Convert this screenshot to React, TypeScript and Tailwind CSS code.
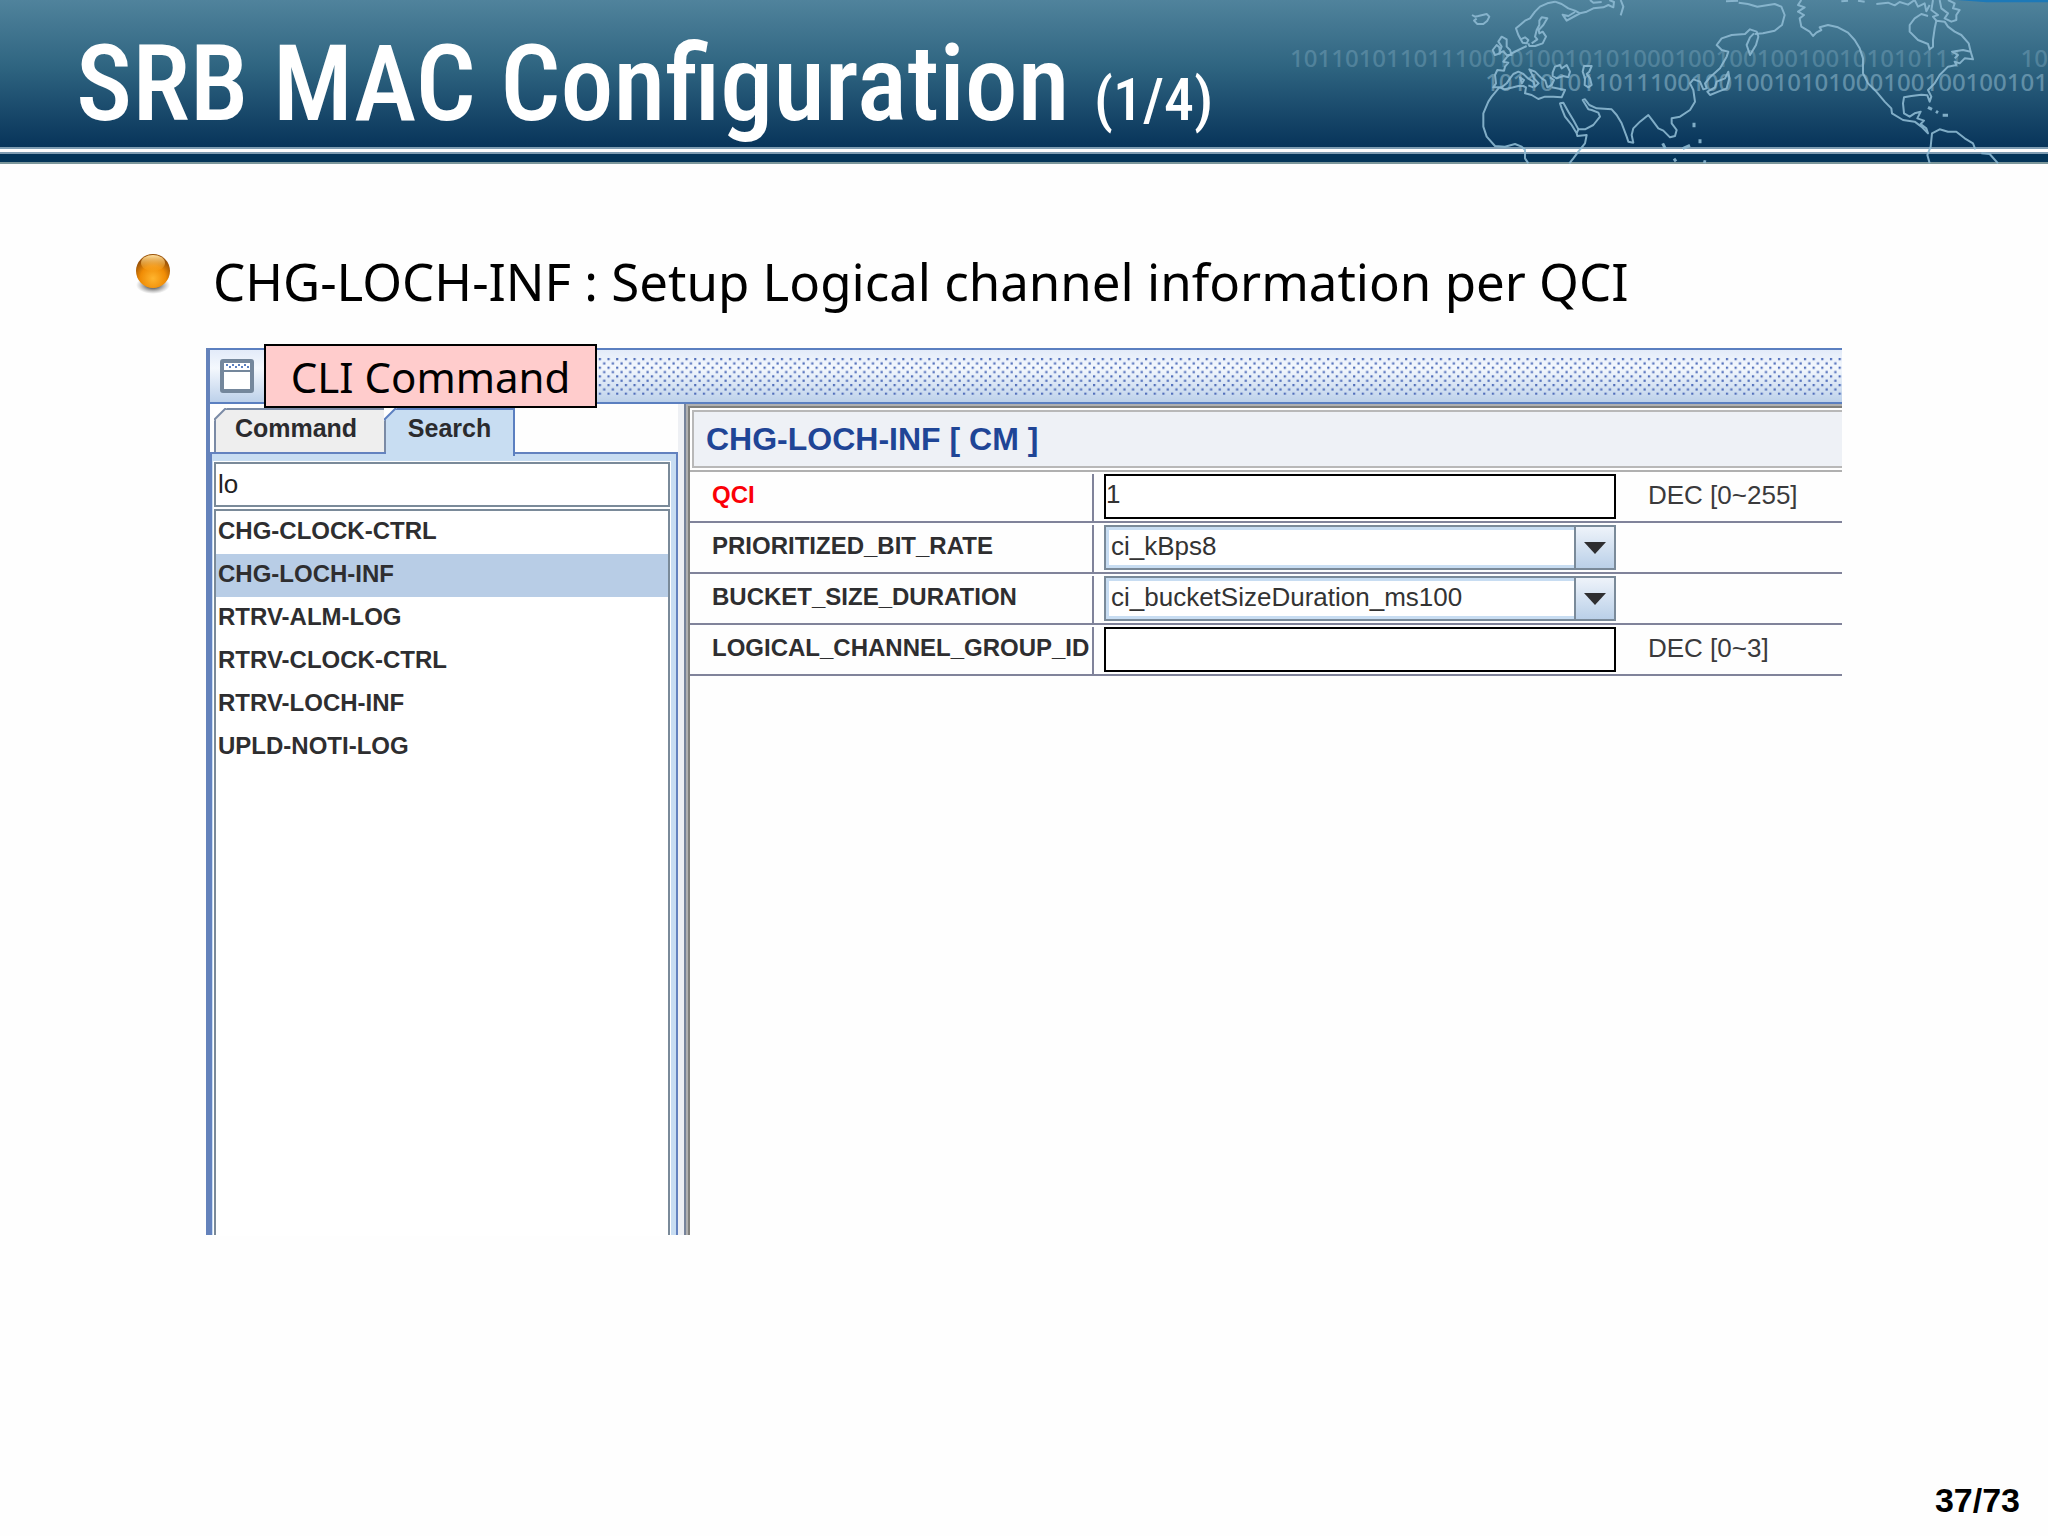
import { useState, type ReactNode } from 'react';

const commands = [
  'CHG-CLOCK-CTRL',
  'CHG-LOCH-INF',
  'RTRV-ALM-LOG',
  'RTRV-CLOCK-CTRL',
  'RTRV-LOCH-INF',
  'UPLD-NOTI-LOG',
];

/** World outline behind the slide title, Europe on the left and the Americas on the right. */
function WorldMap() {
  return (
    <svg
      viewBox="0 0 2334 492"
      className="absolute top-0 right-0 h-full w-[778px]"
      fill="none"
      stroke="#8db9d1"
      strokeWidth="6"
      strokeLinejoin="round"
      strokeOpacity="0.9"
      aria-hidden="true"
    >
      <path d="M2060 0H2334V7H2150Z" fill="#1d79b8" stroke="none" />
      <g transform="translate(570 0)">
        {/* Iceland and Scandinavia */}
        <path d="M36 45L45 50 55 48 80 42 88 50 82 62 70 72 52 72 42 62 50 56" />
        <path d="M285 5L262 10 240 20 225 35 210 55 195 62 180 75 168 85 175 105 182 118 195 112 205 120 200 130 188 128 182 118M205 130L208 138 225 138 248 130 258 110 248 95 238 100 236 90 250 75 262 55 245 52 238 62 238 75 230 90 225 110 232 118 215 130" />
        <path d="M285 5L305 12 325 25 345 32 360 40 380 35 400 25 430 22 445 15 460 22 462 6 448 0M360 40L345 48 320 62 308 44 325 48 345 36M482 0L490 20 482 46M390 0L400 8 425 6" />
        {/* British Isles */}
        <path d="M125 110L115 125 125 140 118 158 130 154 140 165 155 165 150 150 140 140 140 118ZM110 135L98 150 105 165 120 160 118 142Z" />
        {/* Mediterranean */}
        <path d="M200 138L175 150 155 160 140 172 130 185 145 188 135 200 132 212 112 210 105 225 108 250 100 262 125 262 140 250 150 235 160 222 175 215 190 222 205 236 220 245 225 260 236 250 222 235 208 208 225 215 245 235 256 242 262 262 275 255 282 240 270 232M180 232L192 240 186 250ZM205 256L220 262" />
        <path d="M278 218L285 200 300 195 305 205 320 195 330 215 325 232 310 228 290 235 278 228Z" />
        <path d="M372 198L395 198 388 215 380 222 390 235 395 255 385 262 374 255 375 235 368 215Z" />
        <path d="M118 262L135 268 160 262 175 258 190 258 198 262 195 280 215 285 235 297 255 290 280 290 305 292 315 270 290 265 275 262" />
        {/* Africa */}
        <path d="M118 262L95 290 85 305 70 340 70 380 80 410 105 438 135 440 165 432 185 440 195 450 195 475 205 490" />
        <path d="M300 310L310 308 325 335 340 360 355 388 350 400 335 375 315 350 305 325ZM350 400L352 408 380 405 375 430 355 455 340 475 328 490" />
        {/* Arabia, India and the Far East */}
        <path d="M355 388L375 388 400 375 420 350 415 338 395 330 385 328 368 300 375 298 388 315 410 325 455 328 470 345 485 370 500 410 505 425 520 428 515 405 520 385 540 365 565 345 580 365 595 385 610 392 630 412 645 408 650 390 635 370 635 355 660 350 690 330 705 305 700 270 690 250 700 238 720 245 730 268 740 265 735 250 750 232 780 205 800 170 805 155 785 150 770 135 785 115 815 105 855 102 870 88 890 95 895 110 888 135 870 165 860 135 870 112 882 100" />
        <path d="M805 215L795 235 770 245 765 262 742 275 750 285 775 275 800 265 808 235Z" />
        <path d="M702 368V382M720 418V430M608 430L616 446M690 436L668 446M642 476L648 484M730 484L738 486" strokeWidth="9" />
      </g>
      <g transform="translate(1434 0)">
        {/* Kamchatka and the Bering coast */}
        <path d="M0 12L28 20 80 12 100 20 110 45 102 75 80 92 45 100 20 102M-66 4L-30 2M-28 8L0 12" />
        {/* North America */}
        <path d="M160 0L150 15 170 22 150 35 168 45 155 55 160 80 185 95 195 108 205 98 220 90 215 82 240 75 270 82 300 98 320 120 335 145 345 175 345 220 360 250 385 275 410 305 430 325 432 340 465 360 500 365 520 380 540 400 535 385 518 372 528 362 508 355 518 335 500 340 485 350 468 340 465 310 468 292 490 288 520 284 538 286 545 305 550 290 540 270 560 250 575 225 600 200 625 195 620 185 635 190 650 175 675 178 668 155 645 150 612 155 630 165 620 175" />
        <path d="M668 155L662 130 640 105 620 95 600 80 590 65 565 62 560 85 555 120 555 140 545 148 540 132 510 120 485 95 485 75 500 55 520 42 540 48" />
        <path d="M385 12L420 8 440 16 455 6 480 14 500 0 510 20 530 10 535 34 545 15M555 0L550 30 570 45 555 50 565 62M575 0L580 25 600 40 590 55 610 65 625 60 625 45 635 30 615 25 620 10 600 0M280 4L300 2M330 2L350 5" />
        <path d="M540 322L552 328M564 334L570 338M584 346L600 346" strokeWidth="9" />
        {/* South America */}
        <path d="M545 490L538 465 548 440 552 400 575 388 600 395 625 395 650 415 675 430 682 448M700 460L725 462 750 490" />
      </g>
    </svg>
  );
}

function SlideHeader() {
  return (
    <header className="relative flex h-[164px] flex-col">
      <div className="flex-1 bg-linear-to-b from-[#50839c] via-[#2f6581] via-45% to-[#07345a]" />
      <div className="h-[7px] border-y-2 border-[#7f9db3] bg-white" />
      <div className="h-[10px] border-b-2 border-[#7c979b] bg-[#043559]" />
      <div
        aria-hidden="true"
        className="absolute top-[46px] right-0 w-[758px] font-['Noto_Sans',sans-serif] text-2xl leading-6 font-medium whitespace-nowrap text-[#9cc3d6]"
      >
        <div className="flex justify-between opacity-30">
          <span>1011010110111001010010101000100100100100101010111</span>
          <span>10</span>
        </div>
        <div className="text-right opacity-50">10110101101110010010010101000100100100101</div>
      </div>
      <WorldMap />
      <h1 className="absolute top-6 left-[76px] font-['Roboto_Condensed','Liberation_Sans_Narrow',sans-serif] text-[106px] leading-[120px] font-medium whitespace-nowrap text-white">
        SRB MAC Configuration <span className="text-[60px]">(1/4)</span>
      </h1>
    </header>
  );
}

function Bullet() {
  return (
    <svg viewBox="0 0 40 48" className="mt-0.5 h-12 w-10 shrink-0" aria-hidden="true">
      <defs>
        <radialGradient id="ball" cx="50%" cy="72%" r="62%">
          <stop offset="0" stopColor="#ffb52e" />
          <stop offset="0.6" stopColor="#f08c05" />
          <stop offset="1" stopColor="#9a5208" />
        </radialGradient>
        <linearGradient id="gloss" x1="0" y1="0" x2="0" y2="1">
          <stop offset="0" stopColor="#ffe0a0" />
          <stop offset="1" stopColor="#fba41c" stopOpacity="0.2" />
        </linearGradient>
        <radialGradient id="shade">
          <stop offset="0.4" stopColor="#555" stopOpacity="0.8" />
          <stop offset="1" stopColor="#888" stopOpacity="0" />
        </radialGradient>
      </defs>
      <ellipse cx="20" cy="34" rx="17" ry="9" fill="url(#shade)" />
      <circle cx="20" cy="20" r="17" fill="url(#ball)" />
      <ellipse cx="20" cy="12" rx="12" ry="8" fill="url(#gloss)" />
    </svg>
  );
}

function TitleBar() {
  return (
    <div className="flex h-14 items-center border-y-2 border-[#5b7fc0] bg-linear-to-b from-[#e3ebf9] via-[#f4f8fd] via-35% to-[#bdd1ea] pl-2.5">
      <svg viewBox="0 0 34 34" className="size-[34px] shrink-0" aria-hidden="true">
        <rect x="2" y="2" width="30" height="30" rx="1" fill="#fff" stroke="#74879c" strokeWidth="4" />
        <path d="M4 12h26" stroke="#74879c" strokeWidth="2" />
        <path d="M6 6h2M12 6h2M18 6h2M24 6h2M9 8h2M15 8h2M21 8h2M27 8h2" stroke="#5b7fc0" strokeWidth="2" />
      </svg>
      <svg className="ml-6 h-[38px] flex-1" aria-hidden="true">
        <defs>
          <pattern id="dots" width="8.67" height="8.67" patternUnits="userSpaceOnUse">
            <rect x="0" y="1" width="2.2" height="2.2" fill="#4f6dba" />
            <rect x="4.33" y="5.33" width="2.2" height="2.2" fill="#4f6dba" />
          </pattern>
        </defs>
        <rect width="100%" height="100%" fill="url(#dots)" />
      </svg>
    </div>
  );
}

/** Cut-off top left corner of a tab. */
function Corner({ stroke }: { stroke: string }) {
  return (
    <svg viewBox="0 0 13 13" className="absolute -top-0.5 -left-0.5 size-[13px]" aria-hidden="true">
      <path d="M0 0H13L0 13Z" fill="#fff" />
      <path d="M0 12L12 0" stroke={stroke} strokeWidth="2" />
    </svg>
  );
}

function CommandPanel() {
  const [query, setQuery] = useState('lo');
  const [selected, setSelected] = useState('CHG-LOCH-INF');

  return (
    <div className="flex w-[468px] shrink-0 flex-col pt-1">
      <div role="tablist" className="flex h-11 pl-1 text-[25px] leading-7 font-bold text-[#2b2b2e]">
        <button
          role="tab"
          aria-selected="false"
          className="relative flex w-[172px] items-start justify-center border-t-2 border-r-2 border-l-2 border-[#7a8aa5] bg-[#eeeeee] pt-1 pr-2"
        >
          <Corner stroke="#7a8aa5" />
          Command
        </button>
        <button
          role="tab"
          aria-selected="true"
          className="relative z-10 -mb-1 flex w-[129px] items-start justify-center border-t-2 border-r-2 border-[#5b7fc0] bg-[#c8ddf2] pt-1"
        >
          <Corner stroke="#5b7fc0" />
          Search
        </button>
      </div>
      <div className="flex flex-1 flex-col border-x-2 border-t-2 border-[#6382bf] bg-[#c8ddf2] pt-2 pr-1.5 pl-0.5">
        <input
          aria-label="Search command"
          value={query}
          onChange={(e) => setQuery(e.target.value)}
          className="mb-0.5 h-[45px] border-2 border-[#7a8a99] bg-white px-0.5 text-[26px] text-[#222] outline-1 outline-white"
        />
        <ul className="flex-1 border-t-2 border-r-2 border-l-2 border-[#7a8a99] bg-white outline-1 outline-white">
          {commands.map((name) => (
            <li key={name}>
              <button
                onClick={() => setSelected(name)}
                className={`block h-[43px] w-full pb-1 pl-0.5 text-left text-2xl font-bold text-[#2e2e30] ${
                  name === selected ? 'bg-[#b8cde6]' : 'bg-white'
                }`}
              >
                {name}
              </button>
            </li>
          ))}
        </ul>
      </div>
    </div>
  );
}

function FormRow({
  id,
  label,
  hint,
  required,
  children,
}: {
  id: string;
  label: string;
  hint?: string;
  required?: boolean;
  children: ReactNode;
}) {
  return (
    <div className="flex h-[51px] border-b-2 border-[#80839a] pt-0.5">
      <label
        htmlFor={id}
        className={`w-[404px] shrink-0 border-r-2 border-[#80839a] pt-[5px] pl-[22px] text-2xl font-bold ${
          required ? 'text-[#fb0007]' : 'text-[#2e2e30]'
        }`}
      >
        {label}
      </label>
      <div className="ml-2.5 w-[512px] shrink-0">{children}</div>
      {hint ? <span className="pt-[5px] pl-8 text-[26px] leading-8 text-[#3a3a3c]">{hint}</span> : null}
    </div>
  );
}

function TextBox({ id, value }: { id: string; value: string }) {
  return (
    <input
      id={id}
      defaultValue={value}
      className="h-[45px] w-full border-2 border-black bg-white pb-1 text-[26px] text-[#333]"
    />
  );
}

function DropDown({ id, value }: { id: string; value: string }) {
  return (
    <div className="relative">
      <select
        id={id}
        defaultValue={value}
        className="h-[45px] w-full appearance-none border-2 border-[#7a8a99] bg-white pb-1 pl-[5px] text-[26px] text-[#333] inset-ring-3 inset-ring-[#c8ddf2]"
      >
        <option>{value}</option>
      </select>
      <span className="pointer-events-none absolute inset-y-0 right-0 flex w-[42px] items-center justify-center border-2 border-[#7a8a99] bg-linear-to-b from-[#eef3fa] to-[#bad0e8]">
        <svg viewBox="0 0 22 12" className="h-3 w-[22px]" aria-hidden="true">
          <path d="M0 0H22L11 12Z" fill="#2e2e30" />
        </svg>
      </span>
    </div>
  );
}

function ParameterPanel() {
  return (
    <div className="flex min-w-0 flex-1 border-l-2 border-[#76839a]">
      <div className="flex flex-1 border-t-2 border-l-2 border-[#b0b0b0]">
        <div className="flex-1 border-t-2 border-l-2 border-[#80807c]">
          <div className="border-b-2 border-[#b0b0b0] py-0.5 pl-0.5">
            <h3 className="h-[58px] border-y-2 border-l-2 border-[#b8b8b8] bg-[#eef1f6] pl-3 text-[32px] leading-[54px] font-bold text-[#1f4596]">
              CHG-LOCH-INF [ CM ]
            </h3>
          </div>
          <form>
            <FormRow id="qci" label="QCI" hint="DEC [0~255]" required>
              <TextBox id="qci" value="1" />
            </FormRow>
            <FormRow id="bit-rate" label="PRIORITIZED_BIT_RATE">
              <DropDown id="bit-rate" value="ci_kBps8" />
            </FormRow>
            <FormRow id="bucket" label="BUCKET_SIZE_DURATION">
              <DropDown id="bucket" value="ci_bucketSizeDuration_ms100" />
            </FormRow>
            <FormRow id="group-id" label="LOGICAL_CHANNEL_GROUP_ID" hint="DEC [0~3]">
              <TextBox id="group-id" value="" />
            </FormRow>
          </form>
        </div>
      </div>
    </div>
  );
}

export default function App() {
  return (
    <div className="flex min-h-screen flex-col bg-[#fefefe] font-['Liberation_Sans',Arial,sans-serif]">
      <SlideHeader />
      <main className="flex-1 pt-[85px] pr-[206px] pl-[133px]">
        <div className="flex items-start">
          <Bullet />
          <h2 className="pl-10 font-['Noto_Sans',sans-serif] text-[51px] leading-16 whitespace-nowrap text-black">
            CHG-LOCH-INF : Setup Logical channel information per QCI
          </h2>
        </div>
        <section className="relative mt-[35px] ml-[73px] flex h-[887px] flex-col border-l-4 border-[#6482bb]">
          <TitleBar />
          <div className="flex flex-1">
            <CommandPanel />
            <div className="w-1.5 bg-[#eef0f4]" />
            <ParameterPanel />
          </div>
          <div className="absolute -top-1 left-[54px] flex h-16 w-[333px] items-center justify-center border-2 border-black bg-[#ffcccc] font-['Noto_Sans',sans-serif] text-[42px] text-black">
            CLI Command
          </div>
        </section>
      </main>
      <footer className="pr-[28px] pb-4 text-right text-[34px] leading-10 font-bold text-black">37/73</footer>
    </div>
  );
}
